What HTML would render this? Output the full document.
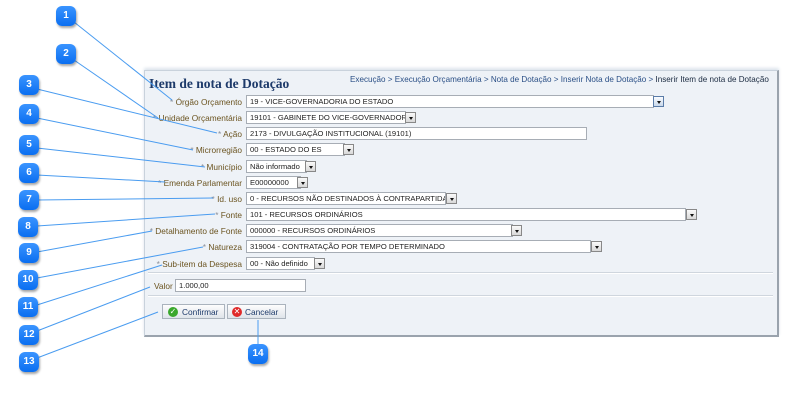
<!DOCTYPE html>
<html><head><meta charset="utf-8"><style>
body{margin:0;width:800px;height:407px;background:#fff;position:relative;overflow:hidden;font-family:"Liberation Sans","DejaVu Sans",sans-serif}
.panel{position:absolute;left:144px;top:70px;width:632px;height:264px;background:#eef2f7;border:1px solid #c9d2dc;border-right:2px solid #9aa3ad;border-bottom:2px solid #9aa3ad;box-shadow:0 -2px 3px #dde4ec}
.title{position:absolute;left:149px;top:76px;font-family:"Liberation Serif",serif;font-weight:bold;font-size:13.5px;color:#1d3a6a}
.bc{position:absolute;left:350px;top:75px;font-size:8.1px;color:#2a4f86;white-space:nowrap}
.bc b{font-weight:normal;color:#1a2a40}
.lbl{position:absolute;right:558px;font-size:8.3px;color:#6b5420;white-space:nowrap}
.lbl i{font-style:normal;color:#8a8f99}
.inp{position:absolute;left:246px;height:11px;background:#fff;border:1px solid #a7adb5;font-size:7.6px;color:#222;line-height:11px;padding-left:3px;white-space:nowrap;overflow:hidden;box-sizing:content-box}
.dd{position:absolute;width:11px;height:11px;border:1px solid #888;background:linear-gradient(#fafafa,#d8d8d8);box-sizing:border-box}
.dd:after{content:"";position:absolute;left:3px;top:4px;border-left:2px solid transparent;border-right:2px solid transparent;border-top:3px solid #111}
.sep{position:absolute;left:148px;width:625px;height:1px;background:#cfd6de;border-bottom:1px solid #fff}
.btn{position:absolute;top:304px;height:15px;border:1px solid #aab3bd;background:linear-gradient(#fdfdfd,#dfe4ea);font-size:8.3px;color:#1d3a6a;line-height:14px;box-sizing:border-box}
.n{position:absolute;width:20px;height:20px;border-radius:6px;background:linear-gradient(#3a94ff,#0a6ef0);color:#fff;font-weight:bold;font-size:10px;text-align:center;line-height:20px;box-shadow:1px 2px 2px rgba(0,0,0,.35)}
svg{position:absolute;left:0;top:0}
</style></head><body>
<div class="panel"></div>
<div class="title">Item de nota de Dotação</div>
<div class="bc">Execução &gt; Execução Orçamentária &gt; Nota de Dotação &gt; Inserir Nota de Dotação &gt; <b>Inserir Item de nota de Dotação</b></div>

<div class="lbl" style="top:97px"><i>* </i>Órgão Orçamento</div>
<div class="inp" style="top:95px;width:403px">19 - VICE-GOVERNADORIA DO ESTADO</div><div class="dd" style="left:653px;top:96px;border-color:#5a7ca8;background:linear-gradient(#fafcff,#c9d8ea)"></div>
<div class="lbl" style="top:113px"><i>* </i>Unidade Orçamentária</div>
<div class="inp" style="top:111px;width:155px">19101 - GABINETE DO VICE-GOVERNADOR</div><div class="dd" style="left:405px;top:112px"></div>
<div class="lbl" style="top:129px"><i>* </i>Ação</div>
<div class="inp" style="top:127px;width:336px">2173 - DIVULGAÇÃO INSTITUCIONAL (19101)</div>
<div class="lbl" style="top:145px"><i>* </i>Microrregião</div>
<div class="inp" style="top:143px;width:94px">00 - ESTADO DO ES</div><div class="dd" style="left:343px;top:144px"></div>
<div class="lbl" style="top:162px"><i>* </i>Município</div>
<div class="inp" style="top:160px;width:56px">Não informado</div><div class="dd" style="left:305px;top:161px"></div>
<div class="lbl" style="top:178px"><i>* </i>Emenda Parlamentar</div>
<div class="inp" style="top:176px;width:50px">E00000000</div><div class="dd" style="left:297px;top:177px"></div>
<div class="lbl" style="top:194px"><i>* </i>Id. uso</div>
<div class="inp" style="top:192px;width:195px">0 - RECURSOS NÃO DESTINADOS À CONTRAPARTIDA</div><div class="dd" style="left:446px;top:193px"></div>
<div class="lbl" style="top:210px"><i>* </i>Fonte</div>
<div class="inp" style="top:208px;width:435px">101 - RECURSOS ORDINÁRIOS</div><div class="dd" style="left:686px;top:209px"></div>
<div class="lbl" style="top:226px"><i>* </i>Detalhamento de Fonte</div>
<div class="inp" style="top:224px;width:262px">000000 - RECURSOS ORDINÁRIOS</div><div class="dd" style="left:511px;top:225px"></div>
<div class="lbl" style="top:242px"><i>* </i>Natureza</div>
<div class="inp" style="top:240px;width:340px">319004 - CONTRATAÇÃO POR TEMPO DETERMINADO</div><div class="dd" style="left:591px;top:241px"></div>
<div class="lbl" style="top:259px"><i>* </i>Sub-item da Despesa</div>
<div class="inp" style="top:257px;width:64px">00 - Não definido</div><div class="dd" style="left:314px;top:258px"></div>

<div class="sep" style="top:272px"></div>
<div style="position:absolute;left:154px;top:281px;font-size:8.3px;color:#6b5420">Valor</div>
<div class="inp" style="left:175px;top:279px;width:126px">1.000,00</div>
<div class="sep" style="top:295px"></div>

<div class="btn" style="left:162px;width:63px"><span style="position:absolute;left:5px;top:2px;width:10px;height:10px;border-radius:50%;background:#3aa82c;color:#fff;font-size:8px;line-height:10px;text-align:center">✓</span><span style="position:absolute;left:19px">Confirmar</span></div>
<div class="btn" style="left:227px;width:59px"><span style="position:absolute;left:4px;top:2px;width:10px;height:10px;border-radius:50%;background:#e02a2a;color:#fff;font-size:8px;line-height:10px;text-align:center">✕</span><span style="position:absolute;left:17px">Cancelar</span></div>

<svg width="800" height="407"><g stroke="#4a9cf0" stroke-width="1" fill="none">
<line x1="74" y1="22" x2="172" y2="100"/>
<line x1="74" y1="60" x2="158" y2="118"/>
<line x1="37" y1="89" x2="217" y2="133"/>
<line x1="37" y1="118" x2="193" y2="150"/>
<line x1="37" y1="148" x2="205" y2="167"/>
<line x1="37" y1="175" x2="165" y2="182"/>
<line x1="37" y1="200" x2="213" y2="198"/>
<line x1="37" y1="226" x2="215" y2="214"/>
<line x1="37" y1="252" x2="152" y2="231"/>
<line x1="37" y1="278" x2="203" y2="247"/>
<line x1="37" y1="305" x2="162" y2="265"/>
<line x1="37" y1="331" x2="150" y2="287"/>
<line x1="37" y1="358" x2="158" y2="312"/>
<line x1="258" y1="320" x2="258" y2="345"/>
</g></svg>
<div class="n" style="left:56px;top:6px">1</div>
<div class="n" style="left:56px;top:44px">2</div>
<div class="n" style="left:19px;top:75px">3</div>
<div class="n" style="left:19px;top:104px">4</div>
<div class="n" style="left:19px;top:135px">5</div>
<div class="n" style="left:19px;top:163px">6</div>
<div class="n" style="left:19px;top:190px">7</div>
<div class="n" style="left:18px;top:217px">8</div>
<div class="n" style="left:19px;top:243px">9</div>
<div class="n" style="left:18px;top:270px">10</div>
<div class="n" style="left:18px;top:297px">11</div>
<div class="n" style="left:19px;top:325px">12</div>
<div class="n" style="left:19px;top:352px">13</div>
<div class="n" style="left:248px;top:344px">14</div>
</body></html>
